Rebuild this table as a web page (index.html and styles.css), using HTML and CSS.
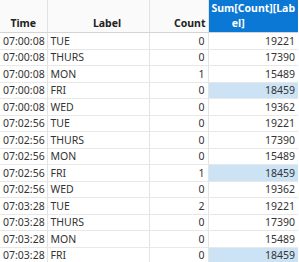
FILE: index.html
```html
<!DOCTYPE html>
<html lang="en">
<head>
    <meta charset="UTF-8">
    <title>Sum by Label</title>
    <link rel="stylesheet" href="styles.css">
</head>
<body>
    <table class="grid">
        <colgroup>
            <col class="c-time">
            <col class="c-label">
            <col class="c-count">
            <col class="c-sum">
        </colgroup>
        <thead>
            <tr>
                <th class="h-time">Time</th>
                <th class="h-label">Label</th>
                <th class="h-count">Count</th>
                <th class="h-sum">Sum[Count][Lab<br><span class="tail">el]</span></th>
            </tr>
        </thead>
        <tbody>
            <tr><td>07:00:08</td><td>TUE</td><td class="num">0</td><td class="num">19221</td></tr>
            <tr><td>07:00:08</td><td>THURS</td><td class="num">0</td><td class="num">17390</td></tr>
            <tr><td>07:00:08</td><td>MON</td><td class="num">1</td><td class="num">15489</td></tr>
            <tr><td>07:00:08</td><td>FRI</td><td class="num">0</td><td class="num sel">18459</td></tr>
            <tr><td>07:00:08</td><td>WED</td><td class="num">0</td><td class="num">19362</td></tr>
            <tr><td>07:02:56</td><td>TUE</td><td class="num">0</td><td class="num">19221</td></tr>
            <tr><td>07:02:56</td><td>THURS</td><td class="num">0</td><td class="num">17390</td></tr>
            <tr><td>07:02:56</td><td>MON</td><td class="num">0</td><td class="num">15489</td></tr>
            <tr><td>07:02:56</td><td>FRI</td><td class="num">1</td><td class="num sel">18459</td></tr>
            <tr><td>07:02:56</td><td>WED</td><td class="num">0</td><td class="num">19362</td></tr>
            <tr><td>07:03:28</td><td>TUE</td><td class="num">2</td><td class="num">19221</td></tr>
            <tr><td>07:03:28</td><td>THURS</td><td class="num">0</td><td class="num">17390</td></tr>
            <tr><td>07:03:28</td><td>MON</td><td class="num">0</td><td class="num">15489</td></tr>
            <tr><td>07:03:28</td><td>FRI</td><td class="num">0</td><td class="num sel">18459</td></tr>
        </tbody>
    </table>
</body>
</html>
```

FILE: styles.css
```css
body {
    margin: 0;
    background-color: #ffffff;
    font-family: 'Noto Sans', 'Open Sans', sans-serif;
    font-size: 10.5px;
    color: #333333;
    overflow: hidden;
}
.grid {
    border-collapse: collapse;
    table-layout: fixed;
    width: 298px;
}
.c-time { width: 47px; }
.c-label { width: 102px; }
.c-count { width: 59px; }
.c-sum { width: 90px; }

th {
    height: 30px;
    padding: 0 4px 2px;
    vertical-align: bottom;
    font-weight: bold;
    color: #222222;
    background-color: #fafafa;
    border-right: 1px solid #e3e3e3;
    border-bottom: 1px solid #d4d4d4;
    line-height: 14px;
}
.h-time { text-align: center; }
.h-label { text-align: center; padding-left: 22px; }
.h-count { text-align: right; padding-right: 2px; }
.h-sum {
    background-color: #0a78d4;
    color: #ffffff;
    text-align: center;
    vertical-align: middle;
    border-right: none;
    padding: 0 2px;
    line-height: 15px;
}
.h-sum .tail { padding-right: 30px; }

td {
    height: 15.5px;
    padding: 0 3px;
    line-height: 14px;
    white-space: nowrap;
    border-right: 1px solid #e3e3e3;
    border-bottom: 1px solid #e8e8e8;
}
td:last-child { border-right: none; }
.num { text-align: right; }
.sel { background-color: #cce3f6; }
```
